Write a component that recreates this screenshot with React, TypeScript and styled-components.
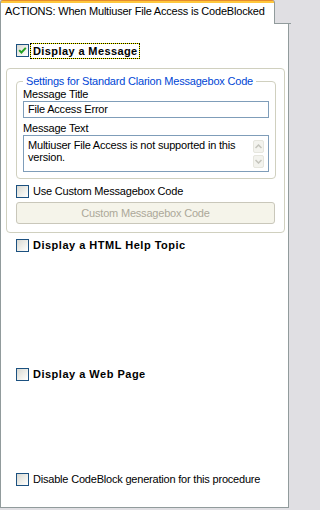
import React from "react";
import styled, { createGlobalStyle } from "styled-components";

const Global = createGlobalStyle`
  html, body { margin: 0; padding: 0; }
  body {
    background: #e0dfe3;
    font-family: "Liberation Sans", Arial, sans-serif;
    font-size: 11px;
    letter-spacing: -0.2px;
    color: #000;
  }
`;

const Page = styled.div`
  width: 291px;
  height: 510px;
  display: flex;
  flex-direction: column;
`;

const TabStrip = styled.div`
  display: flex;
  height: 24px;
`;

const Tab = styled.div`
  box-sizing: border-box;
  width: 275px;
  height: 24px;
  border-left: 1px solid #919b9c;
  border-right: 1px solid #919b9c;
  border-radius: 3px 3px 0 0;
  background: linear-gradient(#e68b2c 0 1px, #ffc73c 1px 3px, #ffffff 3px);
  padding: 5px 0 0 4px;
  white-space: nowrap;
  line-height: 13px;
  color: #000;
`;

const StripRest = styled.div`
  flex: 1;
  border-bottom: 1px solid #919b9c;
`;

const Panel = styled.div`
  box-sizing: border-box;
  width: 289px;
  height: 484px;
  border: 1px solid #919b9c;
  border-top: none;
  background: #fff;
  display: flex;
  flex-direction: column;
  padding-left: 15px;
`;

const Row = styled.div<{ $top: number }>`
  display: flex;
  align-items: center;
  margin-top: ${(p) => p.$top}px;
  height: 15px;
`;

const Box = styled.span`
  box-sizing: border-box;
  width: 13px;
  height: 13px;
  flex: none;
  border: 1px solid #1c5180;
  background: linear-gradient(135deg, #d8d8d2 0%, #efefea 55%, #ffffff 100%);
  display: flex;
  align-items: center;
  justify-content: center;
`;

const Label = styled.span<{ $bold?: boolean }>`
  margin-left: 4px;
  font-weight: ${(p) => (p.$bold ? 700 : 400)};
  letter-spacing: ${(p) => (p.$bold ? "0.5px" : "-0.2px")};
  white-space: nowrap;
  line-height: 13px;
`;

const FocusLabel = styled.span`
  margin-left: 1px;
  padding: 0 1px 0 2px;
  height: 14px;
  line-height: 14px;
  font-weight: 700;
  letter-spacing: 0.4px;
  white-space: nowrap;
  border: 1px dotted #000;
  background: linear-gradient(#fff, #fff) padding-box, #ffff00 border-box;
`;

const OuterGroup = styled.div`
  box-sizing: border-box;
  width: 279px;
  height: 165px;
  margin: 10px 0 0 -10px;
  border: 1px solid #d0d0bf;
  border-radius: 4px;
  padding: 6px 8px 0 9px;
  display: flex;
  flex-direction: column;
`;

const InnerGroup = styled.fieldset`
  box-sizing: border-box;
  width: 260px;
  height: 104px;
  margin: 0;
  border: 1px solid #d0d0bf;
  border-radius: 4px;
  padding: 0 6px 0 6px;
  min-inline-size: 0;
`;

const Legend = styled.legend`
  padding: 0 3px;
  color: #0046d5;
  line-height: 13px;
  white-space: nowrap;
`;

const FieldLabel = styled.div<{ $top: number }>`
  line-height: 13px;
  margin-top: ${(p) => p.$top}px;
`;

const TextBox = styled.div`
  box-sizing: border-box;
  height: 17px;
  border: 1px solid #7f9db9;
  padding: 0 4px;
  line-height: 15px;
  white-space: nowrap;
`;

const MemoBox = styled.div`
  box-sizing: border-box;
  height: 37px;
  border: 1px solid #7f9db9;
  display: flex;
  padding: 3px 4px 0 4px;
`;

const MemoText = styled.div`
  flex: 1;
  line-height: 12px;
`;

const ScrollCol = styled.div`
  display: flex;
  flex-direction: column;
  gap: 2px;
  margin-left: 2px;
  margin-top: 1px;
`;

const ScrollBtn = styled.div`
  box-sizing: border-box;
  width: 11px;
  height: 13px;
  border: 1px solid #e6e6de;
  border-radius: 2px;
  background: #f3f3ee;
  display: flex;
  align-items: center;
  justify-content: center;
`;

const PushButton = styled.div`
  box-sizing: border-box;
  width: 259px;
  height: 22px;
  margin-top: 3px;
  border: 1px solid #c9c7ba;
  border-radius: 3px;
  background: #f5f4ea;
  color: #aca899;
  display: flex;
  align-items: center;
  justify-content: center;
`;

const Check = () => (
  <svg width="9" height="9" viewBox="0 0 9 9">
    <path d="M1.2 4.2 L3.4 6.5 L7.8 1.8" fill="none" stroke="#21a121" strokeWidth="1.9" />
  </svg>
);

const Arrow = ({ up }: { up?: boolean }) => (
  <svg width="7" height="5" viewBox="0 0 7 5">
    <path
      d={up ? "M0.5 4 L3.5 1 L6.5 4" : "M0.5 1 L3.5 4 L6.5 1"}
      fill="none"
      stroke="#c4c4bc"
      strokeWidth="1.5"
    />
  </svg>
);

const CheckRow = ({
  top,
  label,
  bold,
  checked,
  focus,
}: {
  top: number;
  label: string;
  bold?: boolean;
  checked?: boolean;
  focus?: boolean;
}) => (
  <Row $top={top}>
    <Box>{checked && <Check />}</Box>
    {focus ? <FocusLabel>{label}</FocusLabel> : <Label $bold={bold}>{label}</Label>}
  </Row>
);

export default function App() {
  return (
    <Page>
      <Global />
      <TabStrip>
        <Tab>ACTIONS: When Multiuser File Access is CodeBlocked</Tab>
        <StripRest />
      </TabStrip>
      <Panel>
        <CheckRow top={19} label="Display a Message" checked focus />
        <OuterGroup>
          <InnerGroup>
            <Legend>Settings for Standard Clarion Messagebox Code</Legend>
            <FieldLabel $top={0}>Message Title</FieldLabel>
            <TextBox>File Access Error</TextBox>
            <FieldLabel $top={4}>Message Text</FieldLabel>
            <MemoBox>
              <MemoText>Multiuser File Access is not supported in this version.</MemoText>
              <ScrollCol>
                <ScrollBtn>
                  <Arrow up />
                </ScrollBtn>
                <ScrollBtn>
                  <Arrow />
                </ScrollBtn>
              </ScrollCol>
            </MemoBox>
          </InnerGroup>
          <Row $top={5}>
            <Box />
            <Label>Use Custom Messagebox Code</Label>
          </Row>
          <PushButton>Custom Messagebox Code</PushButton>
        </OuterGroup>
        <CheckRow top={5} label="Display a HTML Help Topic" bold />
        <CheckRow top={114} label="Display a Web Page" bold />
        <CheckRow top={90} label="Disable CodeBlock generation for this procedure" />
      </Panel>
    </Page>
  );
}
